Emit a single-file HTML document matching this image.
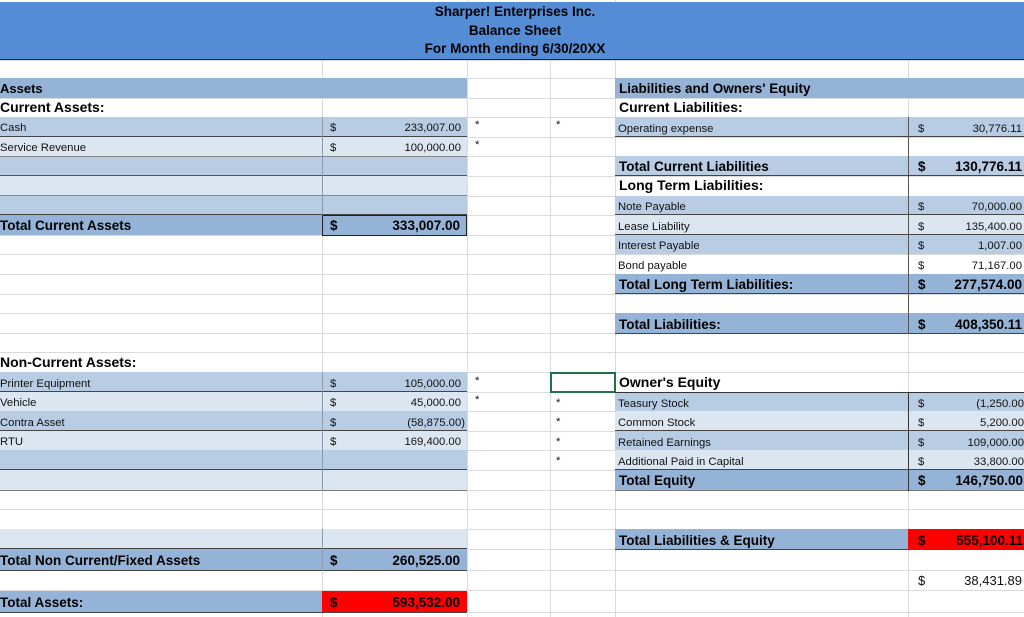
<!DOCTYPE html>
<html><head><meta charset="utf-8"><style>
body{margin:0;width:1024px;height:617px;overflow:hidden;background:#fff;position:relative;font-family:"Liberation Sans",Arial,sans-serif;}
div{position:absolute;box-sizing:border-box;}
.g{background:#dadada}
.d{background:#95b3d7}.m{background:#b8cce4}.l{background:#dce6f1}.red{background:#ff0000}
.t{font-size:11.3px;line-height:22px;white-space:nowrap;color:#111}
.b{font-size:13.5px;font-weight:bold;line-height:19px;white-space:nowrap;color:#000}
.h{font-size:14px;font-weight:bold;line-height:19px;white-space:nowrap;color:#000}
.bb{border-bottom:1px solid #444}
.num{text-align:right}
</style></head><body>
<div class="g" style="left:322px;top:60px;width:1px;height:557px"></div>
<div class="g" style="left:467px;top:0;width:1px;height:617px"></div>
<div class="g" style="left:550px;top:60px;width:1px;height:557px"></div>
<div class="g" style="left:615px;top:0;width:1px;height:617px"></div>
<div class="g" style="left:908px;top:60px;width:1px;height:557px"></div>
<div id="grid"></div>
<script>
var tops=[60,78,97.6,117.2,136.8,156.4,176,195.6,215.2,234.8,254.4,274,293.6,313.2,332.8,352.4,372,391.6,411.2,430.8,450.4,470,489.6,509.2,528.8,549,570,590,612];
var s='';for(var i=0;i<tops.length;i++){s+='<div class="g" style="left:0;top:'+Math.round(tops[i])+'px;width:1024px;height:1px"></div>';}
document.getElementById('grid').outerHTML=s;
</script>
<div style="left:0;top:2px;width:1024px;height:58px;background:#548dd5;border-bottom:1px solid #222"></div>
<div style="left:0;top:3px;width:1030px;text-align:center;font-size:13.5px;font-weight:bold;line-height:18.5px">Sharper! Enterprises Inc.<br>Balance Sheet<br>For Month ending 6/30/20XX</div>

<div class="d" style="left:0;top:78px;width:467px;height:20px"></div>
<div class="b" style="left:0;top:79px;font-size:13px;font-weight:bold">Assets</div>
<div class="h" style="left:0;top:98px">Current Assets:</div>

<div class="m bb" style="left:0;top:117px;width:467px;height:20px"></div>
<div class="l bb" style="left:0;top:137px;width:467px;height:20px;border-color:#888"></div>
<div class="m bb" style="left:0;top:157px;width:467px;height:19px;border-color:#555"></div>
<div class="l bb" style="left:0;top:176px;width:467px;height:20px;border-color:#888"></div>
<div class="m bb" style="left:0;top:196px;width:467px;height:19px"></div>
<div class="d" style="left:0;top:215px;width:467px;height:20px"></div>
<div style="left:322px;top:215px;width:145px;height:21px;border:1px solid #222"></div>
<div style="left:322px;top:117px;width:1px;height:98px;background:#8a9bb0"></div>
<div class="t" style="left:0;top:117px">Cash</div><div class="t" style="left:330px;top:117px">$</div><div class="t num" style="left:370px;top:117px;width:91px">233,007.00</div><div class="t" style="left:475px;top:114px">*</div>
<div class="t" style="left:0;top:137px">Service Revenue</div><div class="t" style="left:330px;top:137px">$</div><div class="t num" style="left:370px;top:137px;width:91px">100,000.00</div><div class="t" style="left:475px;top:134px">*</div>
<div class="t" style="left:556px;top:114px">*</div>
<div class="b" style="left:0;top:216px">Total Current Assets</div><div class="b" style="left:330px;top:216px">$</div><div class="b num" style="left:360px;top:216px;width:100px">333,007.00</div>

<div class="h" style="left:0;top:353px">Non-Current Assets:</div>
<div class="m bb" style="left:0;top:372px;width:467px;height:20px"></div>
<div class="l" style="left:0;top:392px;width:467px;height:19px"></div>
<div class="m bb" style="left:0;top:411px;width:467px;height:20px"></div>
<div class="l" style="left:0;top:431px;width:467px;height:19px"></div>
<div class="m bb" style="left:0;top:450px;width:467px;height:20px"></div>
<div class="l bb" style="left:0;top:470px;width:467px;height:21px;border-color:#777"></div>
<div class="l bb" style="left:0;top:529px;width:467px;height:20px"></div>
<div class="d bb" style="left:0;top:549px;width:467px;height:22px"></div>
<div class="d bb" style="left:0;top:591px;width:467px;height:22px"></div>
<div class="red" style="left:322px;top:591px;width:145px;height:22px;border-bottom:1px solid #444"></div>
<div style="left:322px;top:372px;width:1px;height:119px;background:#8a9bb0"></div>
<div style="left:322px;top:529px;width:1px;height:42px;background:#8a9bb0"></div>
<div class="t" style="left:0;top:373px">Printer Equipment</div><div class="t" style="left:330px;top:373px">$</div><div class="t num" style="left:370px;top:373px;width:91px">105,000.00</div><div class="t" style="left:475px;top:370px">*</div>
<div class="t" style="left:0;top:392px">Vehicle</div><div class="t" style="left:330px;top:392px">$</div><div class="t num" style="left:370px;top:392px;width:91px">45,000.00</div><div class="t" style="left:475px;top:389px">*</div>
<div class="t" style="left:0;top:412px">Contra Asset</div><div class="t" style="left:330px;top:412px">$</div><div class="t num" style="left:370px;top:412px;width:95px">(58,875.00)</div>
<div class="t" style="left:0;top:431px">RTU</div><div class="t" style="left:330px;top:431px">$</div><div class="t num" style="left:370px;top:431px;width:91px">169,400.00</div>
<div class="t" style="left:556px;top:392px">*</div><div class="t" style="left:556px;top:411px">*</div><div class="t" style="left:556px;top:431px">*</div><div class="t" style="left:556px;top:450px">*</div>
<div class="b" style="left:0;top:551px">Total Non Current/Fixed Assets</div><div class="b" style="left:330px;top:551px">$</div><div class="b num" style="left:360px;top:551px;width:100px">260,525.00</div>
<div class="b" style="left:0;top:593px">Total Assets:</div><div class="b" style="left:330px;top:593px">$</div><div class="b num" style="left:360px;top:593px;width:100px">593,532.00</div>
<div style="left:550px;top:372px;width:66px;height:21px;border:2px solid #217346"></div>

<div class="d" style="left:615px;top:78px;width:409px;height:20px"></div>
<div class="b" style="left:619px;top:79px">Liabilities and Owners' Equity</div>
<div class="h" style="left:619px;top:98px">Current Liabilities:</div>
<div class="m bb" style="left:615px;top:117px;width:409px;height:20px"></div>
<div class="t" style="left:618px;top:118px">Operating expense</div><div class="t" style="left:918px;top:118px">$</div><div class="t num" style="left:930px;top:118px;width:92px">30,776.11</div>
<div class="m bb" style="left:615px;top:156px;width:409px;height:20px"></div>
<div class="b" style="left:619px;top:157px">Total Current Liabilities</div><div class="b" style="left:918px;top:157px">$</div><div class="b num" style="left:930px;top:157px;width:92px">130,776.11</div>
<div class="h" style="left:619px;top:176px">Long Term Liabilities:</div>
<div class="m bb" style="left:615px;top:196px;width:409px;height:19px"></div>
<div class="l bb" style="left:615px;top:215px;width:409px;height:20px"></div>
<div class="m" style="left:615px;top:235px;width:409px;height:19px"></div>
<div class="d bb" style="left:615px;top:274px;width:409px;height:20px"></div>
<div class="d bb" style="left:615px;top:313px;width:409px;height:21px"></div>
<div style="left:908px;top:117px;width:1px;height:217px;background:#555"></div>
<div class="t" style="left:618px;top:196px">Note Payable</div><div class="t" style="left:918px;top:196px">$</div><div class="t num" style="left:930px;top:196px;width:92px">70,000.00</div>
<div class="t" style="left:618px;top:216px">Lease Liability</div><div class="t" style="left:918px;top:216px">$</div><div class="t num" style="left:930px;top:216px;width:92px">135,400.00</div>
<div class="t" style="left:618px;top:235px">Interest Payable</div><div class="t" style="left:918px;top:235px">$</div><div class="t num" style="left:930px;top:235px;width:92px">1,007.00</div>
<div class="t" style="left:618px;top:255px">Bond payable</div><div class="t" style="left:918px;top:255px">$</div><div class="t num" style="left:930px;top:255px;width:92px">71,167.00</div>
<div class="b" style="left:619px;top:275px">Total Long Term Liabilities:</div><div class="b" style="left:918px;top:275px">$</div><div class="b num" style="left:930px;top:275px;width:92px">277,574.00</div>
<div class="b" style="left:619px;top:315px">Total Liabilities:</div><div class="b" style="left:918px;top:315px">$</div><div class="b num" style="left:930px;top:315px;width:92px">408,350.11</div>

<div class="h" style="left:619px;top:373px">Owner's Equity</div>
<div class="m" style="left:615px;top:392px;width:409px;height:19px;border-top:1px solid #333"></div>
<div class="l bb" style="left:615px;top:411px;width:409px;height:20px"></div>
<div class="m" style="left:615px;top:431px;width:409px;height:19px"></div>
<div class="l bb" style="left:615px;top:450px;width:409px;height:20px"></div>
<div class="d bb" style="left:615px;top:470px;width:409px;height:21px;border-color:#777"></div>
<div class="d bb" style="left:615px;top:529px;width:409px;height:21px"></div>
<div class="red" style="left:908px;top:529px;width:116px;height:21px"></div>
<div style="left:908px;top:392px;width:1px;height:99px;background:#333"></div>
<div class="t" style="left:618px;top:393px">Teasury Stock</div><div class="t" style="left:918px;top:393px">$</div><div class="t num" style="left:930px;top:393px;width:94px">(1,250.00</div>
<div class="t" style="left:618px;top:412px">Common Stock</div><div class="t" style="left:918px;top:412px">$</div><div class="t num" style="left:930px;top:412px;width:94px">5,200.00</div>
<div class="t" style="left:618px;top:432px">Retained Earnings</div><div class="t" style="left:918px;top:432px">$</div><div class="t num" style="left:930px;top:432px;width:94px">109,000.00</div>
<div class="t" style="left:618px;top:451px">Additional Paid in Capital</div><div class="t" style="left:918px;top:451px">$</div><div class="t num" style="left:930px;top:451px;width:94px">33,800.00</div>
<div class="b" style="left:619px;top:471px">Total Equity</div><div class="b" style="left:918px;top:471px">$</div><div class="b num" style="left:930px;top:471px;width:93px">146,750.00</div>
<div class="b" style="left:619px;top:531px">Total Liabilities &amp; Equity</div><div class="b" style="left:918px;top:531px">$</div><div class="b num" style="left:930px;top:531px;width:93px">555,100.11</div>
<div class="t" style="left:918px;top:571px;font-size:13px;line-height:19px">$</div><div class="t num" style="left:930px;top:571px;width:92px;font-size:13px;line-height:19px">38,431.89</div>
</body></html>
